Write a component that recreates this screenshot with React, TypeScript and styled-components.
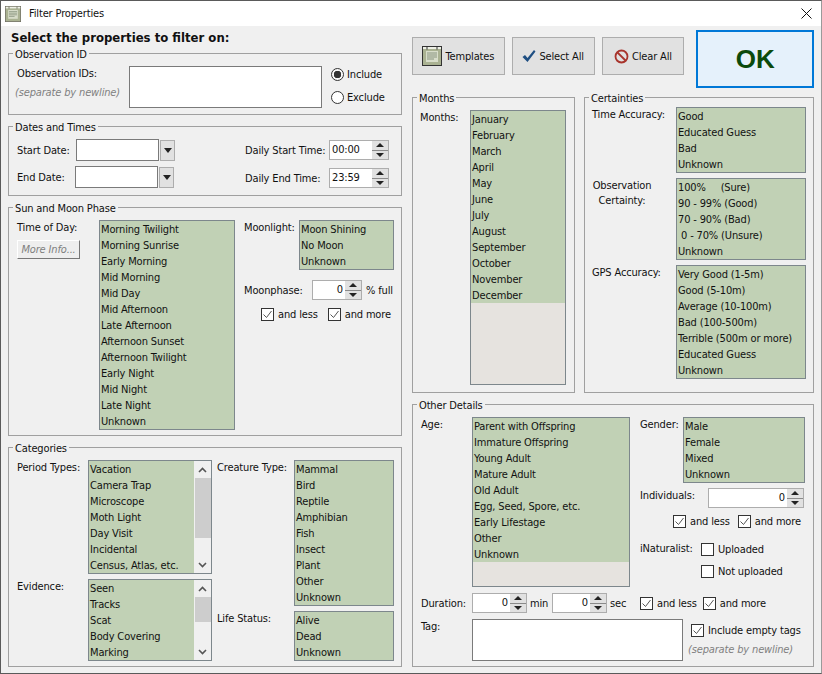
import { ReactNode } from 'react'
import styled, { createGlobalStyle } from 'styled-components'

const UI_FONT = '"DejaVu Sans", Tahoma, sans-serif'

const GlobalStyle = createGlobalStyle`
  html, body {
    margin: 0;
    padding: 0;
    background: #f0f0f0;
  }
  body {
    font-family: ${UI_FONT};
    font-stretch: condensed;
    font-size: 11px;
    letter-spacing: -0.15px;
    color: #111;
  }
  * { box-sizing: border-box; }
`

const Window = styled.div`
  width: 822px;
  height: 674px;
  display: flex;
  flex-direction: column;
  background: #f0f0f0;
  border: 1px solid #5a5a5a;
  border-right-color: #9a9a9a;
  overflow: hidden;
`
const TitleBar = styled.div`
  height: 25px;
  flex-shrink: 0;
  background: #fff;
  display: flex;
  align-items: center;
  padding-left: 4px;
  gap: 8px;
`
const TitleText = styled.span`
  flex: 1;
`
const CloseBox = styled.div`
  width: 30px;
  display: flex;
  justify-content: center;
`
const Body = styled.div`
  display: grid;
  grid-template-columns: 394px 402px;
  column-gap: 10px;
  padding: 4px 0 0 7px;
`
const Column = styled.div`
  display: flex;
  flex-direction: column;
`
const Heading = styled.div`
  font-weight: bold;
  font-size: 13px;
  letter-spacing: 0;
  line-height: 16px;
  padding-left: 3px;
  margin-bottom: 7px;
  height: 16px;
  white-space: nowrap;
`
const GroupBox = styled.section<{ $h: number; $mt?: number }>`
  position: relative;
  height: ${p => p.$h}px;
  margin-top: ${p => p.$mt ?? 0}px;
  border: 1px solid #a0a0a0;
`
const GroupTitle = styled.span`
  position: absolute;
  top: -6px;
  left: 4px;
  padding: 0 2px;
  background: #f0f0f0;
  line-height: 14px;
`
const Label = styled.div<{ $w?: number; $pl?: number; $center?: boolean }>`
  width: ${p => (p.$w ? `${p.$w}px` : 'auto')};
  line-height: 15px;
  padding-left: ${p => p.$pl ?? 0}px;
  text-align: ${p => (p.$center ? 'center' : 'left')};
  white-space: nowrap;
  flex-shrink: 0;
`
const Hint = styled.div<{ $ml?: number }>`
  font-style: italic;
  color: #808080;
  line-height: 16px;
  margin-left: ${p => p.$ml ?? 0}px;
  white-space: nowrap;
`
const TextArea = styled.div<{ $w: number; $h: number }>`
  width: ${p => p.$w}px;
  height: ${p => p.$h}px;
  background: #fff;
  border: 1px solid #7a7a7a;
  flex-shrink: 0;
`
const RadioRow = styled.div`
  display: flex;
  align-items: center;
  gap: 3px;
  height: 16px;
`
const RadioCircle = styled.span<{ $on?: boolean }>`
  width: 13px;
  height: 13px;
  border-radius: 50%;
  border: 1px solid #333;
  background: ${p =>
    p.$on ? 'radial-gradient(circle, #333 0 3.5px, #f8f8f8 4px)' : '#fff'};
`

/* observation id */
const ObsLayout = styled.div`
  display: grid;
  grid-template-columns: 114px 193px 1fr;
  padding: 12px 0 0 6px;
`
const ObsLabels = styled.div`
  display: flex;
  flex-direction: column;
  gap: 4px;
`
const ObsRadios = styled.div`
  display: flex;
  flex-direction: column;
  gap: 7px;
  padding-left: 9px;
`

/* dates */
const DatesLayout = styled.div`
  display: grid;
  grid-template-columns: 228px 1fr;
  padding: 12px 0 0 8px;
`
const DateStack = styled.div`
  display: flex;
  flex-direction: column;
  gap: 5px;
`
const TimeStack = styled.div`
  display: flex;
  flex-direction: column;
  gap: 8px;
  padding-top: 1px;
`
const DateRow = styled.div`
  display: flex;
  align-items: center;
  gap: 1px;
`
const DateInput = styled.div`
  width: 83px;
  height: 22px;
  background: #fff;
  border: 1px solid #7a7a7a;
`
const DropButton = styled.div`
  width: 15px;
  height: 21px;
  background: #e1e1e1;
  border: 1px solid #adadad;
  display: flex;
  align-items: center;
  justify-content: center;
  &::after {
    content: '';
    border-left: 4px solid transparent;
    border-right: 4px solid transparent;
    border-top: 5px solid #222;
  }
`
const TimeRow = styled.div`
  display: grid;
  grid-template-columns: 84px 60px;
  align-items: center;
`

/* spinners */
const SpinBox = styled.div<{ $w: number }>`
  width: ${p => p.$w}px;
  height: 20px;
  background: #fff;
  border: 1px solid #adadad;
  display: flex;
  flex-shrink: 0;
`
const SpinValue = styled.div<{ $left?: boolean }>`
  flex: 1;
  line-height: 18px;
  padding: 0 2px;
  text-align: ${p => (p.$left ? 'left' : 'right')};
`
const SpinArrows = styled.div`
  width: 16px;
  display: flex;
  flex-direction: column;
  gap: 1px;
  background: #8a8a8a;
`
const SpinArrow = styled.span<{ $up?: boolean }>`
  flex: 1;
  background: #e1e1e1;
  display: flex;
  align-items: center;
  justify-content: center;
  &::after {
    content: '';
    border-left: 4px solid transparent;
    border-right: 4px solid transparent;
    ${p => (p.$up ? 'border-bottom: 4px solid #222;' : 'border-top: 4px solid #222;')}
  }
`

function Spinner({ w, value, left }: { w: number; value: string; left?: boolean }) {
  return (
    <SpinBox $w={w}>
      <SpinValue $left={left}>{value}</SpinValue>
      <SpinArrows>
        <SpinArrow $up />
        <SpinArrow />
      </SpinArrows>
    </SpinBox>
  )
}

/* check boxes */
const CheckRow = styled.div`
  display: flex;
  align-items: center;
  gap: 4px;
  height: 16px;
  white-space: nowrap;
`
const CheckSquare = styled.span`
  width: 13px;
  height: 13px;
  background: #fff;
  border: 1px solid #333;
  display: flex;
  flex-shrink: 0;
`
function Check({ label, on = true }: { label: string; on?: boolean }) {
  return (
    <CheckRow>
      <CheckSquare>
        {on && (
          <svg width="11" height="11" viewBox="0 0 11 11" fill="none">
            <path d="M1.5 5.5 L4.5 8.5 L9.5 2" stroke="#555" strokeWidth="1" />
          </svg>
        )}
      </CheckSquare>
      {label}
    </CheckRow>
  )
}
const CheckPair = styled.div<{ $gap: number; $pl?: number; $pt?: number }>`
  display: flex;
  gap: ${p => p.$gap}px;
  padding-left: ${p => p.$pl ?? 0}px;
  padding-top: ${p => p.$pt ?? 0}px;
`

/* list boxes */
const ListFrame = styled.div<{ $w: number; $h?: number; $mt?: number }>`
  width: ${p => p.$w}px;
  height: ${p => (p.$h ? `${p.$h}px` : 'auto')};
  margin-top: ${p => p.$mt ?? 0}px;
  border: 1px solid #7d878c;
  background: #e6e3df;
  display: flex;
  flex-shrink: 0;
  overflow: hidden;
`
const ListItems = styled.ul`
  list-style: none;
  margin: 0;
  padding: 0;
  flex: 1;
`
const ListItem = styled.li`
  background: #c1d1b5;
  line-height: 18px;
  height: 16px;
  padding-left: 1px;
  white-space: pre;
  overflow: hidden;
`
const ScrollTrack = styled.div`
  width: 17px;
  background: #f0f0f0;
  display: flex;
  flex-direction: column;
`
const ScrollEnd = styled.div`
  height: 17px;
  display: flex;
  align-items: center;
  justify-content: center;
`
const ScrollThumb = styled.div<{ $h: number }>`
  height: ${p => p.$h}px;
  margin-left: 1px;
  background: #cdcdcd;
  flex-shrink: 0;
`
const ScrollRest = styled.div`
  flex: 1;
`

function Chevron({ up }: { up?: boolean }) {
  return (
    <svg width="9" height="6" viewBox="0 0 9 6" fill="none">
      <path d={up ? 'M1 5 L4.5 1.5 L8 5' : 'M1 1 L4.5 4.5 L8 1'} stroke="#555" strokeWidth="1.6" />
    </svg>
  )
}

function ListBox({
  items,
  w,
  h,
  mt,
  thumb,
}: {
  items: string[]
  w: number
  h?: number
  mt?: number
  thumb?: number
}) {
  return (
    <ListFrame $w={w} $h={h} $mt={mt}>
      <ListItems>
        {items.map(i => (
          <ListItem key={i}>{i}</ListItem>
        ))}
      </ListItems>
      {thumb && (
        <ScrollTrack>
          <ScrollEnd>
            <Chevron up />
          </ScrollEnd>
          <ScrollThumb $h={thumb} />
          <ScrollRest />
          <ScrollEnd>
            <Chevron />
          </ScrollEnd>
        </ScrollTrack>
      )}
    </ListFrame>
  )
}

/* sun and moon */
const SunLayout = styled.div`
  display: grid;
  grid-template-columns: 82px 136px 1fr;
  padding: 12px 0 0 8px;
`
const SunLeft = styled.div`
  display: flex;
  flex-direction: column;
  gap: 5px;
`
const MoreInfoButton = styled.button`
  width: 63px;
  height: 19px;
  padding: 0;
  font: italic 11px ${UI_FONT};
  font-stretch: condensed;
  letter-spacing: -0.15px;
  color: #808080;
  background: #eeeeee;
  border: 1px solid;
  border-color: #fff #777 #777 #fff;
`
const MoonColumn = styled.div`
  padding-left: 9px;
  display: flex;
  flex-direction: column;
  width: 159px;
`
const MoonTop = styled.div`
  display: flex;
  justify-content: space-between;
`
const MoonPhaseRow = styled.div`
  display: flex;
  align-items: center;
  margin-top: 10px;
`
const Suffix = styled.span<{ $ml?: number; $w?: number }>`
  margin-left: ${p => p.$ml ?? 4}px;
  width: ${p => (p.$w ? `${p.$w}px` : 'auto')};
  white-space: nowrap;
`

/* categories */
const CatLayout = styled.div`
  display: grid;
  grid-template-columns: 71px 124px 5px 77px 100px;
  padding: 12px 0 0 8px;
`
const CatColumn = styled.div`
  display: flex;
  flex-direction: column;
`
const CatLabelStack = styled.div<{ $gap: number }>`
  display: flex;
  flex-direction: column;
  row-gap: ${p => p.$gap}px;
`

/* toolbar */
const Toolbar = styled.div`
  display: flex;
  align-items: flex-start;
  height: 67px;
`
const ToolButton = styled.button<{ $w: number; $ml?: number }>`
  width: ${p => p.$w}px;
  height: 38px;
  margin-left: ${p => p.$ml ?? 0}px;
  margin-top: 7px;
  background: #e1e1e1;
  border: 1px solid #adadad;
  padding: 0;
  font: 11px ${UI_FONT};
  font-stretch: condensed;
  letter-spacing: -0.15px;
  color: #111;
  display: flex;
  align-items: center;
  justify-content: center;
  gap: 3px;
`
const OkButton = styled.button`
  width: 118px;
  height: 58px;
  margin-left: 12px;
  background: #e5f1fb;
  border: 2px solid #0078d7;
  padding: 0;
  font: bold 26px "Liberation Sans", Arial, sans-serif;
  color: #0b4a0b;
`

const TemplatesIcon = ({ size, frame }: { size: number; frame: string }) => (
  <svg width={size} height={size} viewBox="0 0 20 20">
    <rect x="0.5" y="0.5" width="19" height="19" fill="#aab292" stroke={frame} />
    <rect x="1" y="1" width="18" height="2" fill="#eef0e6" />
    <rect x="4" y="5" width="12" height="11" fill="#d8ddca" />
    <path d="M5 7h10M5 9h10M5 11h10M5 13h7" stroke="#8a9580" strokeWidth="1" />
    <path d="M5 0.5v3M15 0.5v3" stroke={frame} />
  </svg>
)

/* right side */
const RightRow = styled.div`
  display: grid;
  grid-template-columns: 163px 230px;
  column-gap: 9px;
`
const MonthsLayout = styled.div`
  display: flex;
  padding: 12px 0 0 7px;
`
const CertLayout = styled.div`
  display: grid;
  grid-template-columns: 84px 130px;
  row-gap: 5px;
  padding: 9px 0 0 7px;
`
const OtherLayout = styled.div`
  display: flex;
  flex-direction: column;
  padding: 12px 0 0 8px;
`
const OtherTop = styled.div`
  display: grid;
  grid-template-columns: 51px 158px 10px 1fr;
`
const OtherRight = styled.div`
  display: flex;
  flex-direction: column;
`
const GenderRow = styled.div`
  display: flex;
  justify-content: space-between;
  width: 165px;
`
const IndividualsRow = styled.div`
  display: flex;
  align-items: flex-start;
  justify-content: space-between;
  width: 164px;
  margin-top: 5px;
`
const InatGrid = styled.div`
  display: grid;
  grid-template-columns: 61px 1fr;
  row-gap: 6px;
  margin-top: 12px;
`
const DurationRow = styled.div`
  display: flex;
  align-items: center;
  margin-top: 6px;
  height: 20px;
`
const TagRow = styled.div`
  display: flex;
  margin-top: 6px;
`
const TagSide = styled.div`
  display: flex;
  flex-direction: column;
  padding: 3px 0 0 8px;
  gap: 4px;
`

const timeOfDay = ['Morning Twilight', 'Morning Sunrise', 'Early Morning', 'Mid Morning', 'Mid Day', 'Mid Afternoon', 'Late Afternoon', 'Afternoon Sunset', 'Afternoon Twilight', 'Early Night', 'Mid Night', 'Late Night', 'Unknown']
const months = ['January', 'February', 'March', 'April', 'May', 'June', 'July', 'August', 'September', 'October', 'November', 'December']
const ageList = ['Parent with Offspring', 'Immature Offspring', 'Young Adult', 'Mature Adult', 'Old Adult', 'Egg, Seed, Spore, etc.', 'Early Lifestage', 'Other', 'Unknown']

function Group({ title, children, h, mt }: { title: string; children: ReactNode; h: number; mt?: number }) {
  return (
    <GroupBox $h={h} $mt={mt}>
      <GroupTitle>{title}</GroupTitle>
      {children}
    </GroupBox>
  )
}

export default function App() {
  return (
    <Window>
      <GlobalStyle />
      <TitleBar>
        <TemplatesIcon size={16} frame="#6f6f60" />
        <TitleText>Filter Properties</TitleText>
        <CloseBox>
          <svg width="11" height="11" viewBox="0 0 11 11">
            <path d="M0.5 0.5 L10.5 10.5 M10.5 0.5 L0.5 10.5" stroke="#111" strokeWidth="1" />
          </svg>
        </CloseBox>
      </TitleBar>
      <Body>
        <Column>
          <Heading>Select the properties to filter on:</Heading>
          <Group title="Observation ID" h={62}>
            <ObsLayout>
              <ObsLabels>
                <Label $pl={2}>Observation IDs:</Label>
                <Hint>(separate by newline)</Hint>
              </ObsLabels>
              <TextArea $w={193} $h={42} />
              <ObsRadios>
                <RadioRow>
                  <RadioCircle $on />
                  Include
                </RadioRow>
                <RadioRow>
                  <RadioCircle />
                  Exclude
                </RadioRow>
              </ObsRadios>
            </ObsLayout>
          </Group>
          <Group title="Dates and Times" h={70} mt={11}>
            <DatesLayout>
              <DateStack>
                <DateRow>
                  <Label $w={58}>Start Date:</Label>
                  <DateInput />
                  <DropButton />
                </DateRow>
                <DateRow>
                  <Label $w={57}>End Date:</Label>
                  <DateInput />
                  <DropButton />
                </DateRow>
              </DateStack>
              <TimeStack>
                <TimeRow>
                  <Label>Daily Start Time:</Label>
                  <Spinner w={60} value="00:00" left />
                </TimeRow>
                <TimeRow>
                  <Label>Daily End Time:</Label>
                  <Spinner w={60} value="23:59" left />
                </TimeRow>
              </TimeStack>
            </DatesLayout>
          </Group>
          <Group title="Sun and Moon Phase" h={229} mt={11}>
            <SunLayout>
              <SunLeft>
                <Label>Time of Day:</Label>
                <MoreInfoButton disabled>More Info...</MoreInfoButton>
              </SunLeft>
              <ListBox items={timeOfDay} w={136} />
              <MoonColumn>
                <MoonTop>
                  <Label>Moonlight:</Label>
                  <ListBox items={['Moon Shining', 'No Moon', 'Unknown']} w={95} />
                </MoonTop>
                <MoonPhaseRow>
                  <Label $w={68}>Moonphase:</Label>
                  <Spinner w={50} value="0" />
                  <Suffix>% full</Suffix>
                </MoonPhaseRow>
                <CheckPair $gap={10} $pl={17} $pt={6}>
                  <Check label="and less" />
                  <Check label="and more" />
                </CheckPair>
              </MoonColumn>
            </SunLayout>
          </Group>
          <Group title="Categories" h={220} mt={11}>
            <CatLayout>
              <CatLabelStack $gap={104}>
                <Label>Period Types:</Label>
                <Label>Evidence:</Label>
              </CatLabelStack>
              <CatColumn>
                <ListBox
                  w={124}
                  h={114}
                  thumb={60}
                  items={['Vacation', 'Camera Trap', 'Microscope', 'Moth Light', 'Day Visit', 'Incidental', 'Census, Atlas, etc.']}
                />
                <ListBox
                  w={124}
                  h={82}
                  mt={5}
                  thumb={25}
                  items={['Seen', 'Tracks', 'Scat', 'Body Covering', 'Marking']}
                />
              </CatColumn>
              <span />
              <CatLabelStack $gap={136}>
                <Label>Creature Type:</Label>
                <Label>Life Status:</Label>
              </CatLabelStack>
              <CatColumn>
                <ListBox w={100} items={['Mammal', 'Bird', 'Reptile', 'Amphibian', 'Fish', 'Insect', 'Plant', 'Other', 'Unknown']} />
                <ListBox w={100} mt={5} items={['Alive', 'Dead', 'Unknown']} />
              </CatColumn>
            </CatLayout>
          </Group>
        </Column>
        <Column>
          <Toolbar>
            <ToolButton $w={93}>
              <TemplatesIcon size={20} frame="#333" />
              Templates
            </ToolButton>
            <ToolButton $w={83} $ml={7}>
              <svg width="14" height="14" viewBox="0 0 14 14">
                <path d="M0.5 8 L3 6 L5.5 9 L12 1 L13.5 2.5 L5.5 13 Z" fill="#1f4f82" />
              </svg>
              Select All
            </ToolButton>
            <ToolButton $w={83} $ml={7}>
              <svg width="15" height="15" viewBox="0 0 15 15" fill="none">
                <circle cx="7.5" cy="7.5" r="6" stroke="#a8342c" strokeWidth="1.8" />
                <path d="M3.5 3.5 L11.5 11.5" stroke="#a8342c" strokeWidth="1.8" />
              </svg>
              Clear All
            </ToolButton>
            <OkButton>OK</OkButton>
          </Toolbar>
          <RightRow>
            <Group title="Months" h={296}>
              <MonthsLayout>
                <Label $w={50}>Months:</Label>
                <ListBox items={months} w={96} h={275} />
              </MonthsLayout>
            </Group>
            <Group title="Certainties" h={296}>
              <CertLayout>
                <Label>Time Accuracy:</Label>
                <ListBox w={130} items={['Good', 'Educated Guess', 'Bad', 'Unknown']} />
                <Label $center $w={60}>
                  Observation
                  <br />
                  Certainty:
                </Label>
                <ListBox w={130} items={['100%     (Sure)', '90 - 99% (Good)', '70 - 90% (Bad)', ' 0 - 70% (Unsure)', 'Unknown']} />
                <Label>GPS Accuracy:</Label>
                <ListBox w={130} items={['Very Good (1-5m)', 'Good (5-10m)', 'Average (10-100m)', 'Bad (100-500m)', 'Terrible (500m or more)', 'Educated Guess', 'Unknown']} />
              </CertLayout>
            </Group>
          </RightRow>
          <Group title="Other Details" h={263} mt={11}>
            <OtherLayout>
              <OtherTop>
                <Label>Age:</Label>
                <ListBox items={ageList} w={158} h={170} />
                <span />
                <OtherRight>
                  <GenderRow>
                    <Label>Gender:</Label>
                    <ListBox w={122} items={['Male', 'Female', 'Mixed', 'Unknown']} />
                  </GenderRow>
                  <IndividualsRow>
                    <Label>Individuals:</Label>
                    <Spinner w={96} value="0" />
                  </IndividualsRow>
                  <CheckPair $gap={8} $pl={33} $pt={5}>
                    <Check label="and less" />
                    <Check label="and more" />
                  </CheckPair>
                  <InatGrid>
                    <Label>iNaturalist:</Label>
                    <Check label="Uploaded" on={false} />
                    <span />
                    <Check label="Not uploaded" on={false} />
                  </InatGrid>
                </OtherRight>
              </OtherTop>
              <DurationRow>
                <Label $w={51}>Duration:</Label>
                <Spinner w={55} value="0" />
                <Suffix $ml={3} $w={22}>min</Suffix>
                <Spinner w={55} value="0" />
                <Suffix $ml={3} $w={30}>sec</Suffix>
                <CheckPair $gap={6}>
                  <Check label="and less" />
                  <Check label="and more" />
                </CheckPair>
              </DurationRow>
              <TagRow>
                <Label $w={51}>Tag:</Label>
                <TextArea $w={211} $h={42} />
                <TagSide>
                  <Check label="Include empty tags" />
                  <Hint $ml={-3}>(separate by newline)</Hint>
                </TagSide>
              </TagRow>
            </OtherLayout>
          </Group>
        </Column>
      </Body>
    </Window>
  )
}
